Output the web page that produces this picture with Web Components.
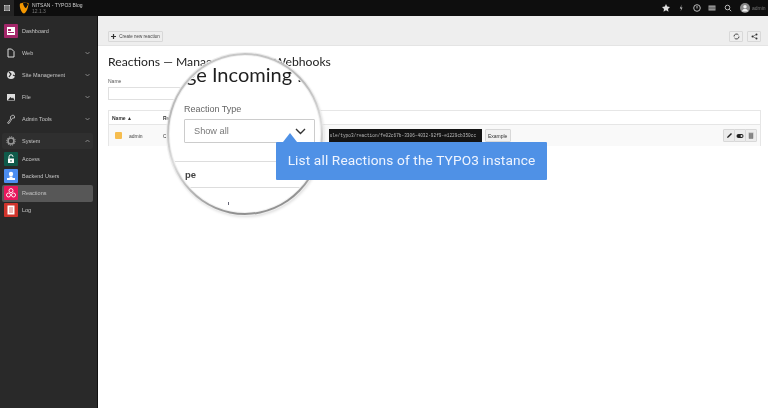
<!DOCTYPE html>
<html><head><meta charset="utf-8"><title>Reactions</title>
<style>
html,body{margin:0;padding:0;background:#fff}
body{width:768px;height:408px;overflow:hidden;font-family:"Liberation Sans",Arial,sans-serif;filter:blur(.5px)}
</style></head><body>
<app-shell>
<top-bar slot="top"></top-bar>
<side-nav slot="side">
<nav-item label="Dashboard" color="#a4276a" glyph="dash"></nav-item>
<nav-item label="Web" glyph="page" caret="down"></nav-item>
<nav-item label="Site Management" glyph="globe" caret="down"></nav-item>
<nav-item label="File" glyph="image" caret="down"></nav-item>
<nav-item label="Admin Tools" glyph="tools" caret="down"></nav-item>
<nav-item label="System" glyph="gear" caret="up" variant="group"></nav-item>
<nav-item label="Access" color="#0f5a4a" glyph="lock" variant="sub"></nav-item>
<nav-item label="Backend Users" color="#4c8df0" glyph="user" variant="sub"></nav-item>
<nav-item label="Reactions" color="#e8175d" glyph="react" variant="sub" active></nav-item>
<nav-item label="Log" color="#d0342c" glyph="log" variant="sub"></nav-item>
</side-nav>
<doc-header slot="head"></doc-header>
<reaction-list slot="main"></reaction-list>
</app-shell>
<magnifier-lens></magnifier-lens>
<call-out>List all Reactions of the TYPO3 instance</call-out>

<script>
const glyphs={
dash:'<rect x="3" y="3" width="8" height="8" fill="#fff"/><rect x="4" y="5" width="3" height="2" fill="#a4276a"/><rect x="4" y="8" width="6" height="1" fill="#a4276a"/>',
page:'<path d="M4 3h3.500L10 5.500V11H4z" fill="none" stroke="#ddd" stroke-width="1"/>',
globe:'<circle cx="7" cy="7" r="4" fill="#ddd"/><path d="M5 4l2 2-2 3M9 7l2 1" stroke="#292929" stroke-width="1.2" fill="none"/>',
image:'<rect x="3" y="4" width="8" height="6.500" fill="#ddd"/><path d="M4 10l2.500-3 1.500 1.500 1-1 1.500 2.500z" fill="#292929"/>',
tools:'<path d="M3.500 11l3-4V4.500L9 3l1.500 1v2H8.500L5 11.500z" fill="none" stroke="#ccc" stroke-width=".8"/>',
gear:'<circle cx="7" cy="7" r="3" fill="none" stroke="#999" stroke-width="1.600"/><circle cx="7" cy="7" r="4.300" fill="none" stroke="#999" stroke-width="1" stroke-dasharray="1.200 1"/>',
lock:'<rect x="4" y="6.500" width="6" height="4.500" fill="#fff"/><path d="M5 6.500V4.800a2 2 0 0 1 4 0" fill="none" stroke="#fff" stroke-width="1"/><rect x="6.500" y="8" width="1" height="1.800" fill="#0f5a4a"/>',
user:'<circle cx="7" cy="5" r="2.200" fill="#fff"/><path d="M5.500 7.500h3v1.500H11v2H3V9h2.500z" fill="#fff"/>',
react:'<circle cx="7" cy="4.600" r="2" fill="none" stroke="#fff" stroke-width=".9"/><circle cx="4.500" cy="9" r="2" fill="none" stroke="#fff" stroke-width=".9"/><circle cx="9.500" cy="9" r="2" fill="none" stroke="#fff" stroke-width=".9"/>',
log:'<rect x="3.500" y="2.500" width="7" height="9" fill="#fff"/><path d="M5 5h4M5 7h4M5 9h4" stroke="#d0342c" stroke-width=".7"/>'
};
function def(name,css,html){
  customElements.define(name,class extends HTMLElement{
    connectedCallback(){
      if(this.shadowRoot)return;
      const r=this.attachShadow({mode:'open'});
      r.innerHTML='<style>'+css+'</style>'+(typeof html==='function'?html(this):html);
    }
  });
}
def('app-shell',`:host{display:grid;grid-template-columns:98px 670px;grid-template-rows:16px 30px 362px;width:768px;height:408px}
.t{grid-column:1/3;display:block}.s{grid-row:2/4;display:block}`,
`<div class="t"><slot name="top"></slot></div><div class="s"><slot name="side"></slot></div><div><slot name="head"></slot></div><div><slot name="main"></slot></div>`);
def('top-bar',`:host{display:flex;align-items:center;height:16px;background:#0e0e0e;color:#ccc;font-size:5px}
.m{width:14px;height:16px;background:#242424;display:flex;align-items:center;justify-content:center}
.logo{margin:0 3px 0 5px;display:flex}
.n{line-height:6.500px;color:#d0d0d0}.n small{display:block;font-size:5px;color:#777}
.r{margin-left:auto;display:flex;align-items:center}
.r svg{display:block;margin-right:5.500px}
.av{width:10px;height:10px;border-radius:50%;background:#888;margin:0 2px 0 2px;display:flex;align-items:center;justify-content:center}
.a{color:#777;width:16px}`,
`<div class="m"><svg width="8" height="8"><path d="M1 1h6v6H1z" fill="#ccc"/><path d="M1 3h6M1 5h6M3 1v6M5 1v6" stroke="#242424" stroke-width=".6"/></svg></div>
<div class="logo"><svg width="10" height="12" viewBox="0 0 10 12"><path d="M1 1.500 5 .500 9.500 1c.3 3-2 10-4.500 10.500C2.500 11.500 0 5 1 1.500z" fill="#f49700"/><path d="M4 .8c0 2 1.500 5 3 5.500L9 2.500 8 .8z" fill="#0e0e0e"/></svg></div>
<div class="n">NITSAN - TYPO3 Blog<small>12.1.3</small></div>
<div class="r">
<svg width="10" height="10" viewBox="0 0 10 10"><path d="M5 1l1.200 2.600 2.800.4-2 1.900.5 2.800L5 7.300 2.500 8.700 3 5.900 1 4l2.800-.4z" fill="#ddd"/></svg>
<svg width="10" height="10" viewBox="0 0 10 10"><path d="M5.800 1.500 3.800 5.500h1.500l-.8 3 2-4H5z" fill="#ccc"/></svg>
<svg width="10" height="10" viewBox="0 0 10 10"><circle cx="5" cy="5" r="3.300" fill="none" stroke="#bbb" stroke-width="1"/><path d="M4.500 3h1v2.500h-1z" fill="#bbb"/></svg>
<svg width="10" height="10" viewBox="0 0 10 10"><rect x="1.500" y="2.500" width="7" height="5" fill="#aaa"/><path d="M1.500 4.200h7M1.500 5.800h7" stroke="#0e0e0e" stroke-width=".5"/></svg>
<svg width="10" height="10" viewBox="0 0 10 10"><circle cx="4.500" cy="4.500" r="2.300" fill="none" stroke="#bbb" stroke-width="1"/><path d="M6.200 6.200l2 2" stroke="#bbb" stroke-width="1"/></svg>
<div class="av"><svg style="margin:0" width="8" height="8" viewBox="0 0 8 8"><circle cx="4" cy="2.800" r="1.700" fill="#eee"/><path d="M1 7.500c.3-2 1.500-2.500 3-2.500s2.700.5 3 2.500z" fill="#eee"/></svg></div>
<div class="a">admin</div></div>`);
def('side-nav',`:host{display:flex;flex-direction:column;box-sizing:border-box;height:392px;background:#292929;border-right:1px solid #111;padding-top:4px}`,`<slot></slot>`);
def('nav-item',`:host{display:flex;align-items:center;height:22px;color:#c4c4c4;font-size:5.500px;position:relative;box-sizing:border-box;margin:0 4px 0 4px}
:host([variant=sub]){height:17px}
:host([variant=group]){height:16px;margin:3px 4px 1.500px 2px;padding-left:2px;background:#2f2f2f;border-radius:2px}
:host([active]){margin:0 4px 0 2px;padding-left:2px;background:#575757;border-radius:2px}
.i{width:14px;height:14px;flex:none;display:block;margin-right:4px;border-radius:1px}
.c{margin-left:auto;margin-right:3px}`,
t=>{const c=t.getAttribute('color'),k=t.getAttribute('caret');
return `<svg class="i" viewBox="0 0 14 14"${c?` style="background:${c}"`:''}>${glyphs[t.getAttribute('glyph')]}</svg><span>${t.getAttribute('label')}</span>`+
(k?`<svg class="c" width="5" height="4" viewBox="0 0 5 4"><path d="${k==='up'?'M.5 3 2.500 1l2 2':'M.5 1l2 2 2-2'}" fill="none" stroke="#999" stroke-width=".8"/></svg>`:'')});
const btn='.b{display:flex;align-items:center;justify-content:center;box-sizing:border-box;background:#eee;border:1px solid #d8d8d8;border-radius:1px;height:11px}';
def('doc-header',`:host{display:flex;align-items:flex-end;box-sizing:border-box;height:30px;background:#eee;border-bottom:1px solid #e4e4e4;padding:0 7px 3px 10px;font-size:4.500px;color:#444;gap:4px}
${btn}.g{width:55px;gap:3px}.g+.x{margin-left:auto}.x{width:14px}`,
`<div class="b g"><svg width="5" height="5"><path d="M2.500 0v5M0 2.500h5" stroke="#333" stroke-width="1.200"/></svg>Create new reaction</div>
<div class="b x"><svg width="7" height="7" viewBox="0 0 7 7"><path d="M1 3.500a2.500 2.500 0 0 1 4.500-1.500M6 3.500A2.500 2.500 0 0 1 1.500 5" fill="none" stroke="#333" stroke-width=".9"/></svg></div>
<div class="b x"><svg width="7" height="7" viewBox="0 0 7 7"><circle cx="5.500" cy="1.500" r="1" fill="#333"/><circle cx="5.500" cy="5.500" r="1" fill="#333"/><circle cx="1.500" cy="3.500" r="1" fill="#333"/><path d="M5.500 1.500l-4 2 4 2" stroke="#333" stroke-width=".5" fill="none"/></svg></div>`);
def('reaction-list',`:host{display:block;box-sizing:border-box;padding:9px 7px 0 10px;color:#333;font-size:5px;height:362px}
h1{margin:0;font:400 12.200px/13px Lato,sans-serif;color:#222;height:13px}
label{display:block;margin-top:10px;height:7px;line-height:7px;color:#555}
.in{width:130px;height:13px;box-sizing:border-box;border:1px solid #e0e0e0;margin-top:2px}
.tb{margin-top:10px;border:1px solid #e6e6e6;height:36px;box-sizing:border-box}
.h{height:13px;display:flex;align-items:center;padding-left:3px;font-weight:700;border-bottom:1px solid #e6e6e6}
.h span:first-child{width:51px}
.row{height:21px;display:flex;align-items:center;background:#f9f9f9}
.dot{width:7px;height:7px;background:#f6bd4f;border-radius:1px;margin:0 7px 0 6px}
.nm{width:34px;color:#444}
.cd{margin-left:162px;width:153px;height:13px;background:#141414;color:#bbb;font:4.450px/13px "Liberation Mono",monospace;white-space:nowrap;overflow:hidden;padding-left:1px;box-sizing:border-box}
${btn}.ex{width:26px;height:13px;margin-left:3px;background:#f1f1f1}
.acts{margin-left:auto;margin-right:3px;display:flex}.acts .b{width:12px;height:13px;margin-left:-1px;background:#ececec}`,
`<h1>Reactions — Manage Incoming Webhooks</h1><label>Name</label><div class="in"></div>
<div class="tb"><div class="h"><span>Name ▲</span><span>Reaction</span></div>
<div class="row"><span class="dot"></span><span class="nm">admin</span><span>C</span>
<span class="cd">ule/typo3/reaction/fe02c67b-3306-4032-92f9-e1229cb350cc</span><span class="b ex">Example</span>
<span class="acts"><span class="b"><svg width="7" height="7" viewBox="0 0 7 7"><path d="M1 6l.5-1.500L5 1l1 1-3.500 3.500z" fill="#222"/></svg></span><span class="b"><svg width="8" height="6" viewBox="0 0 8 6"><rect x=".5" y="1" width="7" height="4" rx="2" fill="#222"/><circle cx="5.500" cy="3" r="1" fill="#eee"/></svg></span><span class="b"><svg width="6" height="7" viewBox="0 0 6 7"><path d="M1 1.500h4V6.500H1zM.5 1h5" fill="#888" stroke="#666" stroke-width=".4"/></svg></span></span></div></div>`);
def('magnifier-lens',`:host{display:block;position:absolute;left:167px;top:53px;width:156px;height:162px;box-sizing:border-box;border-radius:50%;padding:3px;background:linear-gradient(165deg,#cfcfcf 0%,#b8b8b8 30%,#dcdcdc 55%,#8f8f8f 88%,#a8a8a8 100%);box-shadow:0 0 0 1px #eee,1px 2px 3px rgba(0,0,0,.14);color:#555}
.o{width:100%;height:100%;border-radius:50%;overflow:hidden;background:#fff;box-shadow:0 0 0 1px #f3f3f3}
.in{padding:6px 0 0 14px;width:150px;box-sizing:border-box;white-space:nowrap}
.t{font:400 20px/24px Lato,sans-serif;color:#1f1f1f;margin-left:2px;height:24px}
.l{font-size:9px;line-height:12px;margin-top:17px;color:#666}
.s{width:131px;height:24px;box-sizing:border-box;border:1px solid #ccc;margin-top:4px;display:flex;align-items:center;justify-content:space-between;padding:0 9px;font-size:9.200px;color:#777;border-radius:1px}
.s svg{margin-right:-.5px}
.hr{border-top:1px solid #ddd;margin:18px 0 0 -14px;width:160px}
.p{font:700 9.500px/12px "Liberation Sans",sans-serif;margin-top:7px;color:#444;padding-left:1px;height:12px;overflow:hidden}
.q{margin:6px 0 0 -14px;border-top:1px solid #ddd;width:160px}
.k{width:1px;height:3px;background:#667;margin:14px 0 0 44px}`,
`<div class="o"><div class="in"><div class="t">ge Incoming :</div><div class="l">Reaction Type</div>
<div class="s">Show all<svg width="11" height="7" viewBox="0 0 11 7"><path d="M1 1l4.500 4.500L10 1" fill="none" stroke="#333" stroke-width="1.400"/></svg></div>
<div class="hr"></div><div class="p">pe</div><div class="q"></div><div class="k"></div></div></div>`);
def('call-out',`:host{display:block;position:absolute;left:276px;top:142px;width:271px;height:38px;background:#4f91e6;color:#eef4ff;font:400 13.700px/37px Roboto,sans-serif;text-align:center;border-radius:1px;letter-spacing:.12px}
.a{position:absolute;left:7px;top:-9px;width:0;height:0;border:7px solid transparent;border-top:0;border-bottom:9px solid #4f91e6}`,
`<span class="a"></span><slot></slot>`);
</script>
</body></html>
